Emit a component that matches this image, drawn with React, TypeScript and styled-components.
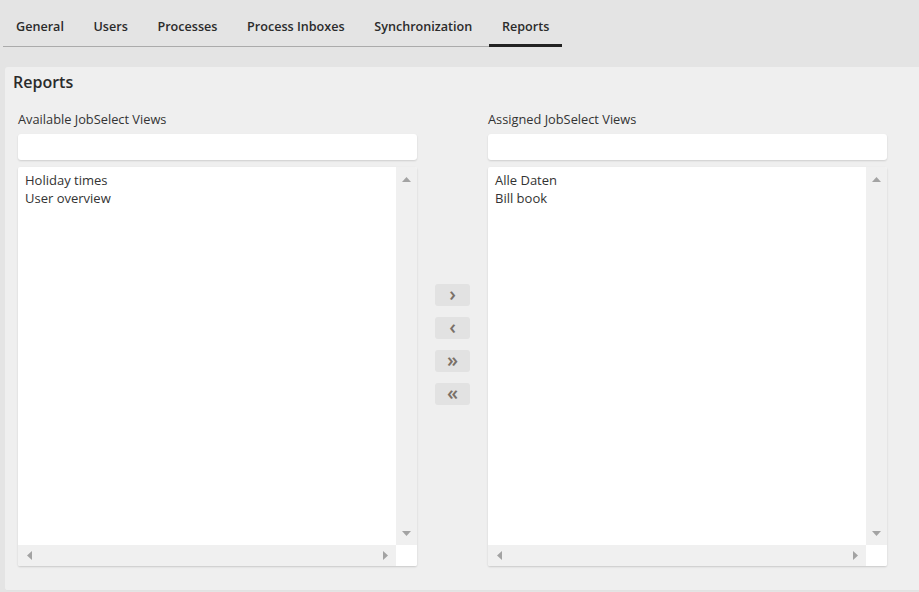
import styled, {createGlobalStyle} from "styled-components";
import React from "react";

const GlobalStyle = createGlobalStyle`
    html, body {
        margin: 0;
        padding: 0;
        background-color: #e4e4e4;
        font-family: "Open Sans", "Noto Sans", sans-serif;
        color: #333;
        overflow: hidden;
    }
`

const tabs = ["General", "Users", "Processes", "Process Inboxes", "Synchronization", "Reports"]

interface listProps {
    label: string;
    items: Array<string>;
}

function Arrow({dir}: {dir: "up" | "down" | "left" | "right"}) {
    const points = {
        up: "0,5 4.5,0 9,5",
        down: "0,0 9,0 4.5,5",
        left: "5,0 5,9 0,4.5",
        right: "0,0 5,4.5 0,9"
    }[dir]
    const vertical = dir === "up" || dir === "down"
    return (
        <svg width={vertical ? 9 : 5} height={vertical ? 5 : 9} viewBox={vertical ? "0 0 9 5" : "0 0 5 9"}>
            <polygon points={points} fill="#a3a3a3"/>
        </svg>
    )
}

function ViewList({label, items}: listProps) {
    return (
        <Column>
            <Label>{label}</Label>
            <Filter/>
            <ListBox>
                <ListBody>
                    {items.map((item, key) => (
                        <ListItem key={key}>{item}</ListItem>
                    ))}
                </ListBody>
                <VScroll>
                    <Arrow dir="up"/>
                    <Arrow dir="down"/>
                </VScroll>
                <HScroll>
                    <Arrow dir="left"/>
                    <Arrow dir="right"/>
                </HScroll>
                <Corner/>
            </ListBox>
        </Column>
    )
}

export default function App() {
    return (
        <>
            <GlobalStyle/>
            <TabBar>
                {tabs.map((tab) => (
                    <Tab key={tab} $active={tab === "Reports"}>{tab}</Tab>
                ))}
            </TabBar>
            <Panel>
                <Title>Reports</Title>
                <Columns>
                    <ViewList label="Available JobSelect Views" items={["Holiday times", "User overview"]}/>
                    <Buttons>
                        <MoveButton>›</MoveButton>
                        <MoveButton>‹</MoveButton>
                        <MoveButton>»</MoveButton>
                        <MoveButton>«</MoveButton>
                    </Buttons>
                    <ViewList label="Assigned JobSelect Views" items={["Alle Daten", "Bill book"]}/>
                </Columns>
            </Panel>
        </>
    )
}

const TabBar = styled.div`
    display: inline-flex;
    gap: 3.6px;
    margin: 0 0 20px 3px;
    height: 46px;
    border-bottom: 1px solid #ababab;
    vertical-align: top;
`

const Tab = styled.div<{$active: boolean}>`
    display: flex;
    align-items: center;
    box-sizing: border-box;
    padding: 8px 13px 0 13px;
    height: 47px;
    margin-bottom: -1px;
    font-size: 12.6px;
    font-weight: 600;
    color: #2b2b2b;
    border-bottom: 3px solid ${props => props.$active ? "#222" : "transparent"};
`

const Panel = styled.div`
    margin: 0 -10px 0 5px;
    height: 524px;
    box-sizing: border-box;
    background-color: #efefef;
    border-radius: 3px;
    border-bottom: 1px solid #e2e2e2;
    padding: 5px 0 0 8px;
`

const Title = styled.h2`
    margin: 0 0 18px 0;
    font-size: 16px;
    font-weight: 600;
    line-height: 20px;
    color: #2b2b2b;
`

const Columns = styled.div`
    display: grid;
    grid-template-columns: 399px 71px 399px;
    padding-left: 5px;
`

const Column = styled.div`
    display: flex;
    flex-direction: column;
`

const Label = styled.div`
    font-size: 12.8px;
    line-height: 18px;
    margin-bottom: 6px;
    color: #333;
`

const Filter = styled.div`
    height: 26px;
    background-color: white;
    border-radius: 3px;
    box-shadow: 0 1px 2px rgba(0, 0, 0, 0.14);
    margin-bottom: 7px;
`

const ListBox = styled.div`
    height: 399px;
    display: grid;
    grid-template-columns: 1fr 21px;
    grid-template-rows: 1fr 21px;
    background-color: white;
    border-radius: 2px;
    box-shadow: 0 1px 2px rgba(0, 0, 0, 0.16);
    overflow: hidden;
`

const ListBody = styled.div`
    padding: 4px 7px;
`

const ListItem = styled.div`
    font-size: 13px;
    line-height: 18px;
    color: #333;
`

const VScroll = styled.div`
    background-color: #f0f0f0;
    display: flex;
    flex-direction: column;
    justify-content: space-between;
    align-items: center;
    padding: 10px 0 9px 0;
`

const HScroll = styled.div`
    background-color: #f0f0f0;
    display: flex;
    justify-content: space-between;
    align-items: center;
    padding: 0 8px 0 9px;
`

const Corner = styled.div`
    background-color: white;
`

const Buttons = styled.div`
    display: flex;
    flex-direction: column;
    align-items: center;
    gap: 11px;
    padding-top: 174px;
`

const MoveButton = styled.div`
    width: 35px;
    height: 22px;
    display: flex;
    align-items: center;
    justify-content: center;
    background-color: #e2e2e2;
    border-radius: 3px;
    font-size: 20px;
    font-weight: 600;
    line-height: 22px;
    color: #7a7068;
    padding-bottom: 3px;
    box-sizing: border-box;
`
